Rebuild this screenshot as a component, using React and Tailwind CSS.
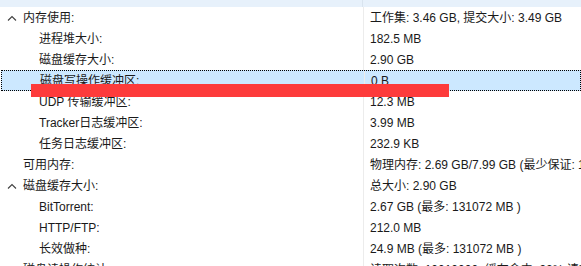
import { useState } from "react";

const rows = [
  { label: "内存使用:", value: "工作集: 3.46 GB, 提交大小: 3.49 GB", level: 1, open: true },
  { label: "进程堆大小:", value: "182.5 MB", level: 2 },
  { label: "磁盘缓存大小:", value: "2.90 GB", level: 2 },
  { label: "磁盘写操作缓冲区:", value: "0 B", level: 2, selected: true },
  { label: "UDP 传输缓冲区:", value: "12.3 MB", level: 2 },
  { label: "Tracker日志缓冲区:", value: "3.99 MB", level: 2 },
  { label: "任务日志缓冲区:", value: "232.9 KB", level: 2 },
  { label: "可用内存:", value: "物理内存: 2.69 GB/7.99 GB (最少保证: 1.00 GB)", level: 1 },
  { label: "磁盘缓存大小:", value: "总大小:  2.90 GB", level: 1, open: true },
  { label: "BitTorrent:", value: "2.67 GB (最多: 131072 MB )", level: 2 },
  { label: "HTTP/FTP:", value: "212.0 MB", level: 2 },
  { label: "长效做种:", value: "24.9 MB (最多: 131072 MB )", level: 2 },
  { label: "磁盘读操作统计:", value: "读取次数: 10010000, 缓存命中: 92% 请求次数", level: 1 },
];

function Chevron() {
  return (
    <svg width="10" height="6" viewBox="0 0 10 6" className="absolute left-[7px] top-[8px]">
      <polyline points="1,5.5 5,1.5 9,5.5" fill="none" stroke="#404040" strokeWidth="1.1" />
    </svg>
  );
}

export default function App() {
  const [selected, setSelected] = useState(3);

  return (
    <div
      className="relative w-[581px] h-[266px] overflow-hidden bg-white text-[12px] text-[#1a1a1a]"
      style={{ fontFamily: '"Liberation Sans", "Noto Sans CJK SC", sans-serif' }}
    >
      <div className="flex h-[7px] bg-[#e7f1fb]">
        <div className="w-[363px] border-r border-[#d9e4ef]"></div>
        <div className="flex-1"></div>
      </div>
      {rows.map((row, i) => (
        <div
          key={i}
          onClick={() => setSelected(i)}
          className={`flex h-[21px] items-center leading-none ${
            selected === i ? "ml-[1px] bg-[#cce8ff] border border-dotted border-black" : ""
          }`}
        >
          <div
            className={`relative flex h-full w-[363px] shrink-0 items-center ${
              row.level === 1 ? "pl-[23px]" : "pl-[39px]"
            } ${selected === i ? "-ml-[1px]" : ""}`}
          >
            {row.open && <Chevron />}
            <span>{row.label}</span>
          </div>
          <div className="flex h-full flex-1 items-center whitespace-nowrap border-l border-[#ececec] pl-[6px]">
            {row.value}
          </div>
        </div>
      ))}
      {/* redaction bar drawn over the rows */}
      <div className="absolute left-[31px] top-[84px] h-[13px] w-[418px] bg-[#fd3b3b]"></div>
    </div>
  );
}
